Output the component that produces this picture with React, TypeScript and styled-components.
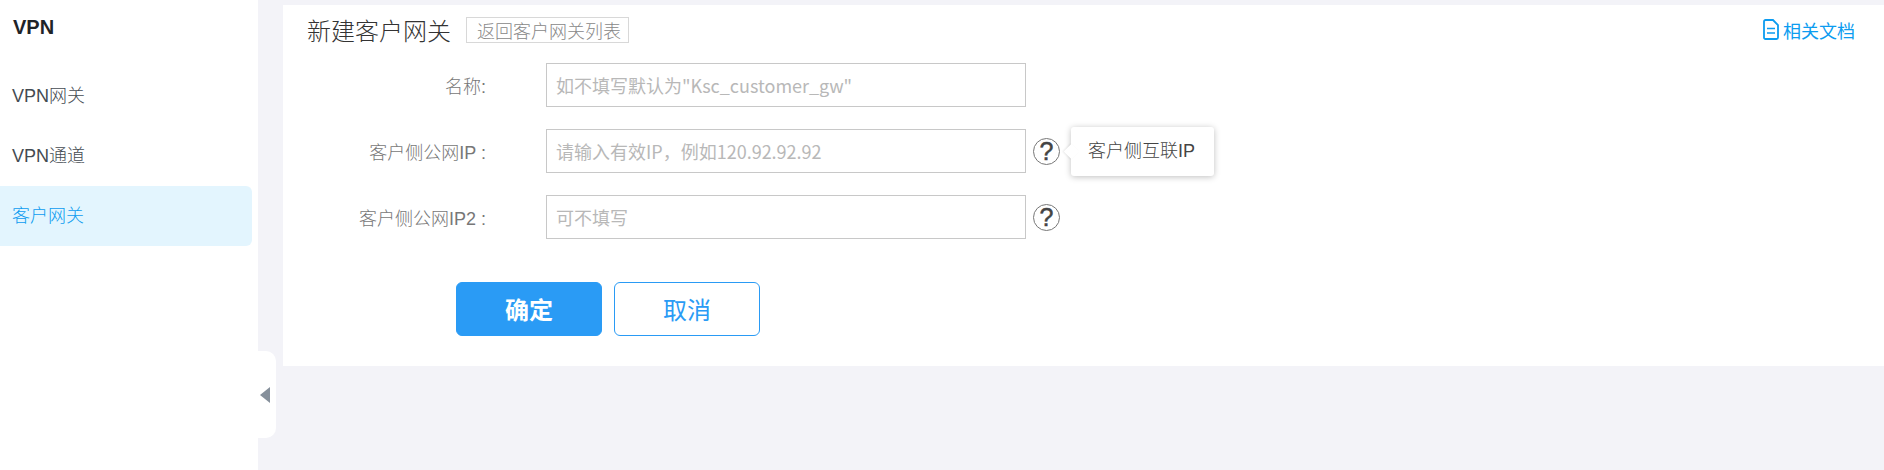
import React from "react";
import styled, { createGlobalStyle } from "styled-components";

const Global = createGlobalStyle`
  html, body { margin: 0; padding: 0; height: 470px; overflow: hidden; background: #f3f3f8; }
  body { font-family: "Liberation Sans", "Noto Sans CJK SC", sans-serif; }
  * { box-sizing: border-box; }
`;

const Page = styled.div`
  display: flex;
  width: 1884px;
  height: 470px;
  background: #f3f3f8;
`;
const Sidebar = styled.aside`
  position: relative;
  width: 258px;
  flex: none;
  background: #fff;
  padding-right: 6px;
`;
const SideTitle = styled.div`
  height: 55px;
  padding-left: 13px;
  line-height: 55px;
  font-size: 20px;
  font-weight: 700;
  color: #1f2328;
`;
const NavList = styled.nav`
  display: flex;
  flex-direction: column;
  margin-top: 11px;
`;
const NavItem = styled.div<{ $active?: boolean }>`
  height: 60px;
  padding-left: 12px;
  line-height: 60px;
  font-size: 18px;
  font-weight: 300;
  border-radius: 0 6px 6px 0;
  color: ${(p) => (p.$active ? "#0c9cf0" : "#444b52")};
  background: ${(p) => (p.$active ? "#e3f5fe" : "transparent")};
`;
const Collapse = styled.div`
  position: absolute;
  left: 254px;
  top: 351px;
  width: 22px;
  height: 87px;
  background: #fff;
  border-radius: 0 10px 10px 0;
  display: flex;
  align-items: center;
  padding-left: 6px;
`;
const Arrow = styled.span`
  width: 0;
  height: 0;
  border-style: solid;
  border-width: 8px 10px 8px 0;
  border-color: transparent #86909b transparent transparent;
`;
const Main = styled.main`
  flex: 1;
  padding: 5px 0 0 25px;
`;
const Card = styled.section`
  height: 361px;
  background: #fff;
  padding: 0 0 0 24px;
`;
const Header = styled.header`
  display: flex;
  align-items: center;
  height: 47px;
  padding-top: 2px;
`;
const Title = styled.h1`
  margin: 0;
  font-size: 24px;
  font-weight: 300;
  color: #333;
  font-family: "Noto Sans CJK SC", sans-serif;
`;
const BackTag = styled.span`
  margin-left: 15px;
  height: 26px;
  line-height: 24px;
  padding: 0 7px 0 10px;
  border: 1px solid #d8d8d8;
  font-size: 18px;
  font-weight: 300;
  color: #888;
  font-family: "Noto Sans CJK SC", sans-serif;
`;
const DocLink = styled.a`
  display: flex;
  align-items: center;
  gap: 4px;
  margin-left: auto;
  margin-right: 29px;
  font-size: 18px;
  color: #0c9cf0;
  font-family: "Noto Sans CJK SC", sans-serif;
`;
const Form = styled.form`
  display: flex;
  flex-direction: column;
  gap: 22px;
  margin-top: 11px;
  margin-left: -1px;
`;
const Row = styled.div`
  position: relative;
  display: flex;
  align-items: center;
`;
const Label = styled.label`
  width: 180px;
  text-align: right;
  font-size: 18px;
  font-weight: 300;
  color: #777;
  margin-right: 60px;
  flex: none;
`;
const Input = styled.input`
  width: 480px;
  height: 44px;
  padding: 0 9px;
  border: 1px solid #c8c8c8;
  border-radius: 0;
  outline: none;
  font-size: 18px;
  font-family: "Noto Sans CJK SC", sans-serif;
  &::placeholder { color: #b8b8b8; opacity: 1; }
`;
const Help = styled.span`
  width: 27px;
  height: 27px;
  margin-left: 7px;
  border: 1px solid #777;
  border-radius: 50%;
  text-align: center;
  line-height: 25px;
  font-size: 25px;
  color: #444;
  -webkit-text-stroke: 0.5px #444;
  font-family: "Liberation Sans", sans-serif;
`;
const Tooltip = styled.div`
  position: absolute;
  left: 765px;
  top: -2px;
  width: 143px;
  height: 49px;
  line-height: 49px;
  padding-left: 17px;
  font-size: 18px;
  font-weight: 300;
  color: #444;
  background: #fff;
  border-radius: 3px;
  box-shadow: 0 1px 6px rgba(0, 0, 0, 0.25);
  &::before {
    content: "";
    position: absolute;
    left: -5px;
    top: 19px;
    width: 11px;
    height: 11px;
    background: #fff;
    transform: rotate(45deg);
    box-shadow: -1px 1px 2px rgba(0,0,0,0.08);
  }
`;
const Actions = styled.div`
  display: flex;
  gap: 12px;
  margin: 21px 0 0 150px;
`;
const Button = styled.button<{ $primary?: boolean }>`
  height: 54px;
  width: 146px;
  border: 1px solid #2a9bf5;
  border-radius: 6px;
  padding-bottom: 2px;
  font-size: 24px;
  line-height: 1;
  font-weight: ${(p) => (p.$primary ? 700 : 400)};
  font-family: "Noto Sans CJK SC", sans-serif;
  color: ${(p) => (p.$primary ? "#fff" : "#2a9bf5")};
  background: ${(p) => (p.$primary ? "#2a9bf5" : "#fff")};
`;

const DocIcon = () => (
  <svg width="16" height="21" viewBox="0 0 16 21" fill="none" stroke="#0c9cf0" strokeWidth="1.8">
    <path d="M2.500 1H10l5 5v12.500a1.500 1.500 0 0 1-1.500 1.500h-11A1.500 1.500 0 0 1 1 18.500v-16A1.500 1.500 0 0 1 2.500 1z" />
    <path d="M4 9.500h8M4 14h8" strokeWidth="1.600" />
  </svg>
);

export default function App() {
  return (
    <Page>
      <Global />
      <Sidebar>
        <SideTitle>VPN</SideTitle>
        <NavList>
          <NavItem>VPN网关</NavItem>
          <NavItem>VPN通道</NavItem>
          <NavItem $active>客户网关</NavItem>
        </NavList>
        <Collapse><Arrow /></Collapse>
      </Sidebar>
      <Main>
        <Card>
          <Header>
            <Title>新建客户网关</Title>
            <BackTag>返回客户网关列表</BackTag>
            <DocLink><DocIcon />相关文档</DocLink>
          </Header>
          <Form>
            <Row>
              <Label>名称:</Label>
              <Input placeholder='如不填写默认为"Ksc_customer_gw"' />
            </Row>
            <Row>
              <Label>客户侧公网IP :</Label>
              <Input placeholder="请输入有效IP，例如120.92.92.92" />
              <Help>?</Help>
              <Tooltip>客户侧互联IP</Tooltip>
            </Row>
            <Row>
              <Label>客户侧公网IP2 :</Label>
              <Input placeholder="可不填写" />
              <Help>?</Help>
            </Row>
            <Actions>
              <Button type="button" $primary>确定</Button>
              <Button type="button">取消</Button>
            </Actions>
          </Form>
        </Card>
      </Main>
    </Page>
  );
}
